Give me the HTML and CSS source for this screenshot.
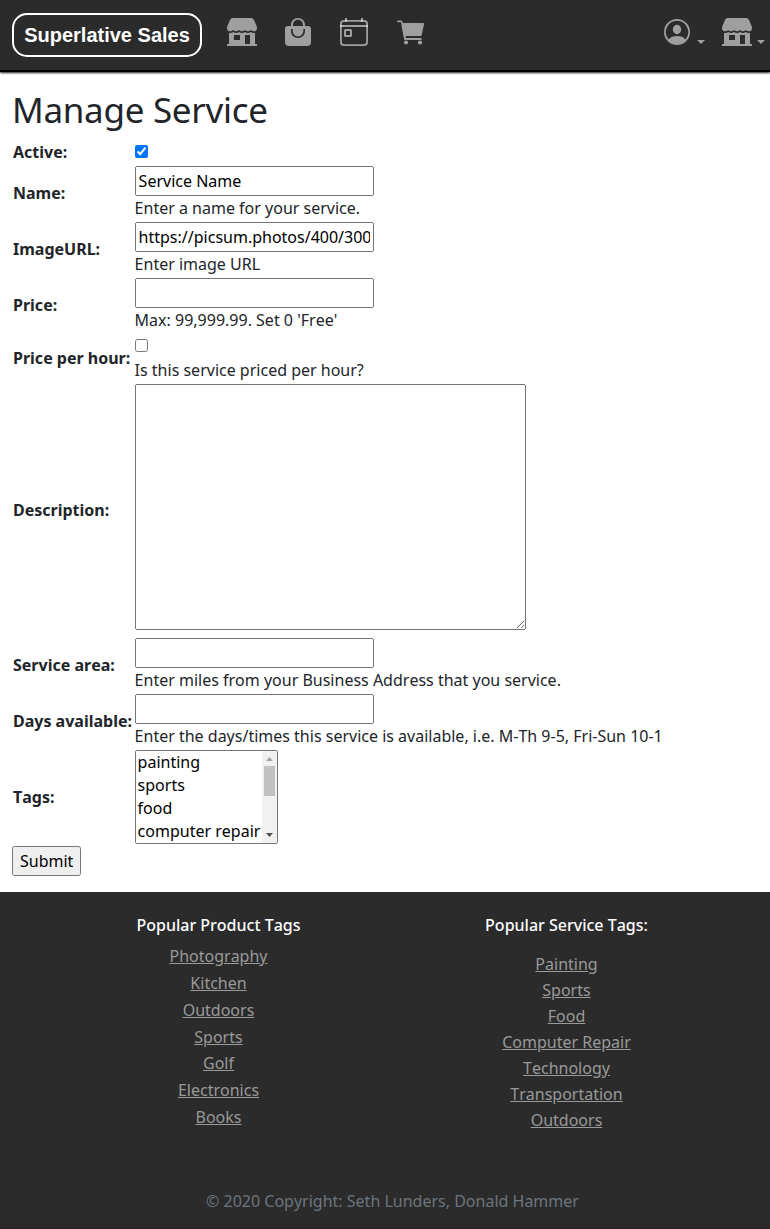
FILE: index.html
```html
<!DOCTYPE html>
<html lang="en">
<head>
<meta charset="utf-8">
<title>Manage Service</title>
<link rel="stylesheet" href="styles.css">
</head>
<body>
<svg class="defs" width="0" height="0" aria-hidden="true">
  <symbol id="shop" viewBox="0 0 30 28">
    <path fill-rule="evenodd" d="M6 0H24Q26.200 0 27 2L29.600 8Q30 9.200 30 10.200C30 12.200 28.600 13.300 27 13.300Q25 13.300 23.800 12Q22.500 13.300 21 13.300Q19.200 13.300 18 12Q16.500 13.300 15 13.300Q13.500 13.300 12 12Q10.800 13.300 9 13.300Q7.500 13.300 6.200 12Q5 13.300 3 13.300C1.400 13.300 0 12.200 0 10.200Q0 9.200 .4 8L3 2Q3.800 0 6 0ZM2 14.800Q4.500 15.400 6.200 14Q9 15.800 12 14Q15 15.800 18 14Q21 15.800 23.800 14Q25.500 15.400 28 14.800V26H30V28H0V26H2ZM7 17V22H13V17ZM18 17V26H23V17Z"/>
  </symbol>
</svg>
<header class="navbar">
  <a class="brand" href="#">Superlative Sales</a>
  <nav class="links">
    <a href="#"><svg width="30" height="28"><use href="#shop"/></svg></a>
    <a href="#"><svg width="26" height="28" viewBox="0 0 26 28"><path fill-rule="evenodd" d="M6 8V7C6 3 9 0 13 0S20 3 20 7V8H23Q26 8 26 11V24Q26 28 22 28H4Q0 28 0 24V11Q0 8 3 8ZM8 8H18V7C18 4 16 1.700 13 1.700S8 4 8 7ZM6 11V13C6 17 9 20 13 20S20 17 20 13V11H18.300V13C18.300 16 16 18.300 13 18.300S7.700 16 7.700 13V11Z"/></svg></a>
    <a href="#"><svg width="28" height="28" viewBox="0 0 28 28"><path fill-rule="evenodd" d="M4 2H24Q28 2 28 6V24Q28 28 24 28H4Q0 28 0 24V6Q0 2 4 2ZM4.500 3.800Q1.800 3.800 1.800 6.500V23.500Q1.800 26.200 4.500 26.200H23.500Q26.200 26.200 26.200 23.500V6.500Q26.200 3.800 23.500 3.800ZM5.500 11H10.500Q12 11 12 12.500V17.500Q12 19 10.500 19H5.500Q4 19 4 17.500V12.500Q4 11 5.500 11ZM6 13V17H10V13Z"/><path d="M0 7H28V9H0ZM5 0H7V4H5ZM21 0H23V4H21Z"/></svg></a>
    <a href="#"><svg width="27" height="26" viewBox="0 0 27 26"><path d="M0 1.200Q0 .4 .8 .4H4Q5 .4 5.200 1.200L5.700 3H26Q27.200 3 27 4.200L24.700 15Q24.500 16 23.500 16H8.700L9 18H24.500V20H8Q7.200 20 7 19L4 2.200H.8Q0 2.200 0 1.200Z"/><circle cx="9" cy="22.500" r="2.100"/><circle cx="23" cy="22.500" r="2.100"/></svg></a>
  </nav>
  <nav class="account">
    <a class="toggle" href="#"><svg width="26" height="26" viewBox="0 0 26 26"><path fill-rule="evenodd" d="M13 0A13 13 0 1 1 13 26A13 13 0 1 1 13 0ZM13 1.800A11.200 11.200 0 0 0 4.600 20.400Q7 17 13 17T21.400 20.400A11.200 11.200 0 0 0 13 1.800Z"/><ellipse cx="13" cy="10.500" rx="4.200" ry="4.700"/></svg></a>
    <a class="toggle" href="#"><svg width="30" height="28"><use href="#shop"/></svg></a>
  </nav>
</header>
<main class="content">
  <h1>Manage Service</h1>
  <form>
    <table>
      <tr><th>Active:</th><td><input type="checkbox" checked></td></tr>
      <tr><th>Name:</th><td><input type="text" value="Service Name"><br>Enter a name for your service.</td></tr>
      <tr><th>ImageURL:</th><td><input type="text" value="https://picsum.photos/400/300"><br>Enter image URL</td></tr>
      <tr><th>Price:</th><td><input type="text"><br>Max: 99,999.99. Set 0 'Free'</td></tr>
      <tr><th>Price per hour:</th><td><input type="checkbox"><br>Is this service priced per hour?</td></tr>
      <tr><th>Description:</th><td><textarea cols="40" rows="10"></textarea></td></tr>
      <tr><th>Service area:</th><td><input type="text"><br>Enter miles from your Business Address that you service.</td></tr>
      <tr><th>Days available:</th><td><input type="text"><br>Enter the days/times this service is available, i.e. M-Th 9-5, Fri-Sun 10-1</td></tr>
      <tr><th>Tags:</th><td><div class="listbox"><select multiple>
        <option>painting</option><option>sports</option><option>food</option><option>computer repair</option>
        <option>technology</option><option>outdoors</option><option>golf</option><option>kitchen</option>
        <option>books</option><option>electronics</option>
      </select><svg class="scrollbar" width="15" height="92" viewBox="0 0 15 92"><path fill="#f1f1f1" d="M0 0H15V92H0Z"/><path fill="#a3a3a3" d="M4 10L7.500 6L11 10Z"/><path fill="#c1c1c1" d="M2 15H13V45H2Z"/><path fill="#505050" d="M4 82H11L7.500 86Z"/></svg></div></td></tr>
    </table>
    <input class="submit" type="submit" value="Submit">
  </form>
</main>
<footer class="footer">
  <div class="columns">
    <section class="products">
      <h2>Popular Product Tags</h2>
      <ul><li><a href="#">Photography</a></li><li><a href="#">Kitchen</a></li><li><a href="#">Outdoors</a></li><li><a href="#">Sports</a></li><li><a href="#">Golf</a></li><li><a href="#">Electronics</a></li><li><a href="#">Books</a></li></ul>
    </section>
    <section class="services">
      <h2>Popular Service Tags:</h2>
      <ul><li><a href="#">Painting</a></li><li><a href="#">Sports</a></li><li><a href="#">Food</a></li><li><a href="#">Computer Repair</a></li><li><a href="#">Technology</a></li><li><a href="#">Transportation</a></li><li><a href="#">Outdoors</a></li></ul>
    </section>
  </div>
  <p class="copyright">© 2020 Copyright: Seth Lunders, Donald Hammer</p>
</footer>
</body>
</html>
```
FILE: styles.css
```css
*, ::before, ::after { box-sizing: border-box; }
body {
  margin: 0;
  font: 16px/1.5 "Noto Sans", sans-serif;
  font-kerning: none;
  color: #212529;
  background: #fff;
}
.defs { position: absolute; }
.navbar {
  display: flex;
  align-items: flex-start;
  height: 72px;
  padding: 13px 5px 0 12px;
  background: #2b2b2b;
  border-bottom: 2px solid #000;
  box-shadow: 0 1px 2px rgba(0, 0, 0, .9);
}
.navbar svg { display: block; fill: rgba(255, 255, 255, .55); }
.brand {
  width: 190px;
  height: 44px;
  border: 2px solid #fff;
  border-radius: 15px;
  color: #fff;
  font: bold 20px/40px "Liberation Sans", Arial, sans-serif;
  text-align: center;
  text-decoration: none;
}
.links { display: flex; gap: 28px; margin: 5px 0 0 25px; }
.links a:nth-child(3) { margin-left: 1px; }
.links a:last-child { margin: 2px 0 0 1px; }
.account { display: flex; gap: 17px; margin: 5px 0 0 auto; }
.toggle { display: flex; align-items: flex-start; }
.toggle:first-child svg { margin: 1px 7px 0 0; }
.toggle:last-child svg { margin-right: 5px; }
.toggle::after {
  content: "";
  margin-top: 22px;
  border: 4px solid transparent;
  border-top-color: rgba(255, 255, 255, .55);
  border-bottom: 0;
}
.content { padding: 17px 12px 16px; }
h1 { margin: 0 0 8px; font-size: 35px; font-weight: 400; line-height: 42px; letter-spacing: -.3px; }
table { border-collapse: collapse; }
th { width: 121.600px; padding: 1px; text-align: left; font-weight: bold; white-space: nowrap; }
td { padding: 1px; }
input, textarea, select { margin: 0; font: inherit; font-kerning: inherit; }
input[type="text"] { width: 239px; }
textarea { width: 391px; height: 246px; resize: both; }
.listbox { position: relative; width: 143px; height: 94px; }
.listbox select { display: block; width: 143px; height: 94px; }
.scrollbar { position: absolute; top: 1px; right: 1px; }
.submit { display: block; margin-top: 1px; height: 30px; }
.footer { height: 337px; padding-top: 21px; background: #2b2b2b; border-bottom: 1px solid #241f20; }
.columns { display: flex; width: 696px; margin-left: 44.500px; text-align: center; }
.columns section { width: 348px; height: 264px; }
h2 {
  margin: 0 0 6px;
  color: #fff;
  font-size: 16px;
  font-weight: 500;
  line-height: 24px;
}
ul { margin: 0; padding: 0; list-style: none; }
.products li { line-height: 26.850px; }
.services ul { padding-top: 8px; }
.services li { line-height: 26px; }
.footer a { color: #999; }
.copyright { margin: 12px 0 0; padding-left: 15px; color: #6c757d; text-align: center; }
```
